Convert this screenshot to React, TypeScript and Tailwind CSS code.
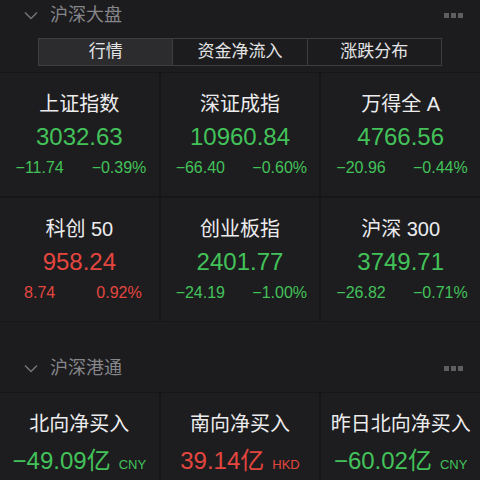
import React from "react";

const GREEN = "text-[#43c25a]";
const RED = "text-[#e4463f]";

type Item = { name: string; value: string; ch: string; pct: string; up: boolean };

const items: Item[] = [
  { name: "上证指数", value: "3032.63", ch: "−11.74", pct: "−0.39%", up: false },
  { name: "深证成指", value: "10960.84", ch: "−66.40", pct: "−0.60%", up: false },
  { name: "万得全 A", value: "4766.56", ch: "−20.96", pct: "−0.44%", up: false },
  { name: "科创 50", value: "958.24", ch: "8.74", pct: "0.92%", up: true },
  { name: "创业板指", value: "2401.77", ch: "−24.19", pct: "−1.00%", up: false },
  { name: "沪深 300", value: "3749.71", ch: "−26.82", pct: "−0.71%", up: false },
];

const flows = [
  { name: "北向净买入", value: "−49.09亿", unit: "CNY", up: false },
  { name: "南向净买入", value: "39.14亿", unit: "HKD", up: true },
  { name: "昨日北向净买入", value: "−60.02亿", unit: "CNY", up: false },
];

const CJK = "font-['Liberation_Sans','Noto_Sans_CJK_SC',sans-serif]";

function Chevron() {
  return (
    <svg width="14" height="9" viewBox="0 0 14 9" className="shrink-0">
      <path d="M1 1.5 L7 7.5 L13 1.5" fill="none" stroke="#77777b" strokeWidth="1.4" />
    </svg>
  );
}

function Dots() {
  return (
    <div className="flex gap-[2px]">
      <div className="w-[5px] h-[5px] bg-[#5e5e62]" />
      <div className="w-[5px] h-[5px] bg-[#5e5e62]" />
      <div className="w-[5px] h-[5px] bg-[#5e5e62]" />
    </div>
  );
}

function SectionHeader({ title }: { title: string }) {
  return (
    <div className="flex items-center h-[30px] pl-[24px] pr-[17px]">
      <Chevron />
      <span className="ml-[12px] text-[18px] text-[#86868a] leading-none">{title}</span>
      <div className="flex-1" />
      <Dots />
    </div>
  );
}

export default function App() {
  return (
    <div className={`w-[480px] h-[480px] overflow-hidden bg-[#1c1c1e] ${CJK}`}>
      <SectionHeader title="沪深大盘" />
      <div className="mx-[38px] mt-[8px] h-[28px] flex border border-[#3e3e42] text-[17px] text-[#e4e4e6]">
        <div className="flex-1 flex items-center justify-center bg-[#2c2c2f]">行情</div>
        <div className="flex-1 flex items-center justify-center border-l border-[#3e3e42]">资金净流入</div>
        <div className="flex-1 flex items-center justify-center border-l border-[#3e3e42]">涨跌分布</div>
      </div>
      <div className="mt-[6px] grid grid-cols-3 gap-[2px] bg-[#161618] py-[1px]">
        {items.map((it) => {
          const c = it.up ? RED : GREEN;
          return (
            <div key={it.name} className="h-[123px] bg-[#1d1d1f] flex flex-col items-center">
              <div className="mt-[19px] text-[20px] leading-[24px] text-[#ececee]">{it.name}</div>
              <div className={`mt-[7px] text-[24px] leading-[28px] ${c}`}>{it.value}</div>
              <div className={`mt-[7px] w-full flex text-[16px] leading-[20px] ${c}`}>
                <div className="flex-1 text-center">{it.ch}</div>
                <div className="flex-1 text-center">{it.pct}</div>
              </div>
            </div>
          );
        })}
      </div>
      <div className="mt-[31px]">
        <SectionHeader title="沪深港通" />
      </div>
      <div className="mt-[9px] grid grid-cols-3 gap-[2px] bg-[#161618] pt-[1px]">
        {flows.map((f) => {
          const c = f.up ? RED : GREEN;
          return (
            <div key={f.name} className="h-[100px] bg-[#1d1d1f] flex flex-col items-center">
              <div className="mt-[19px] text-[20px] leading-[24px] text-[#ececee]">{f.name}</div>
              <div className={`mt-[11px] flex items-baseline ${c}`}>
                <span className="text-[24px] leading-[28px]">{f.value}</span>
                <span className="ml-[8px] text-[13px]">{f.unit}</span>
              </div>
            </div>
          );
        })}
      </div>
    </div>
  );
}
